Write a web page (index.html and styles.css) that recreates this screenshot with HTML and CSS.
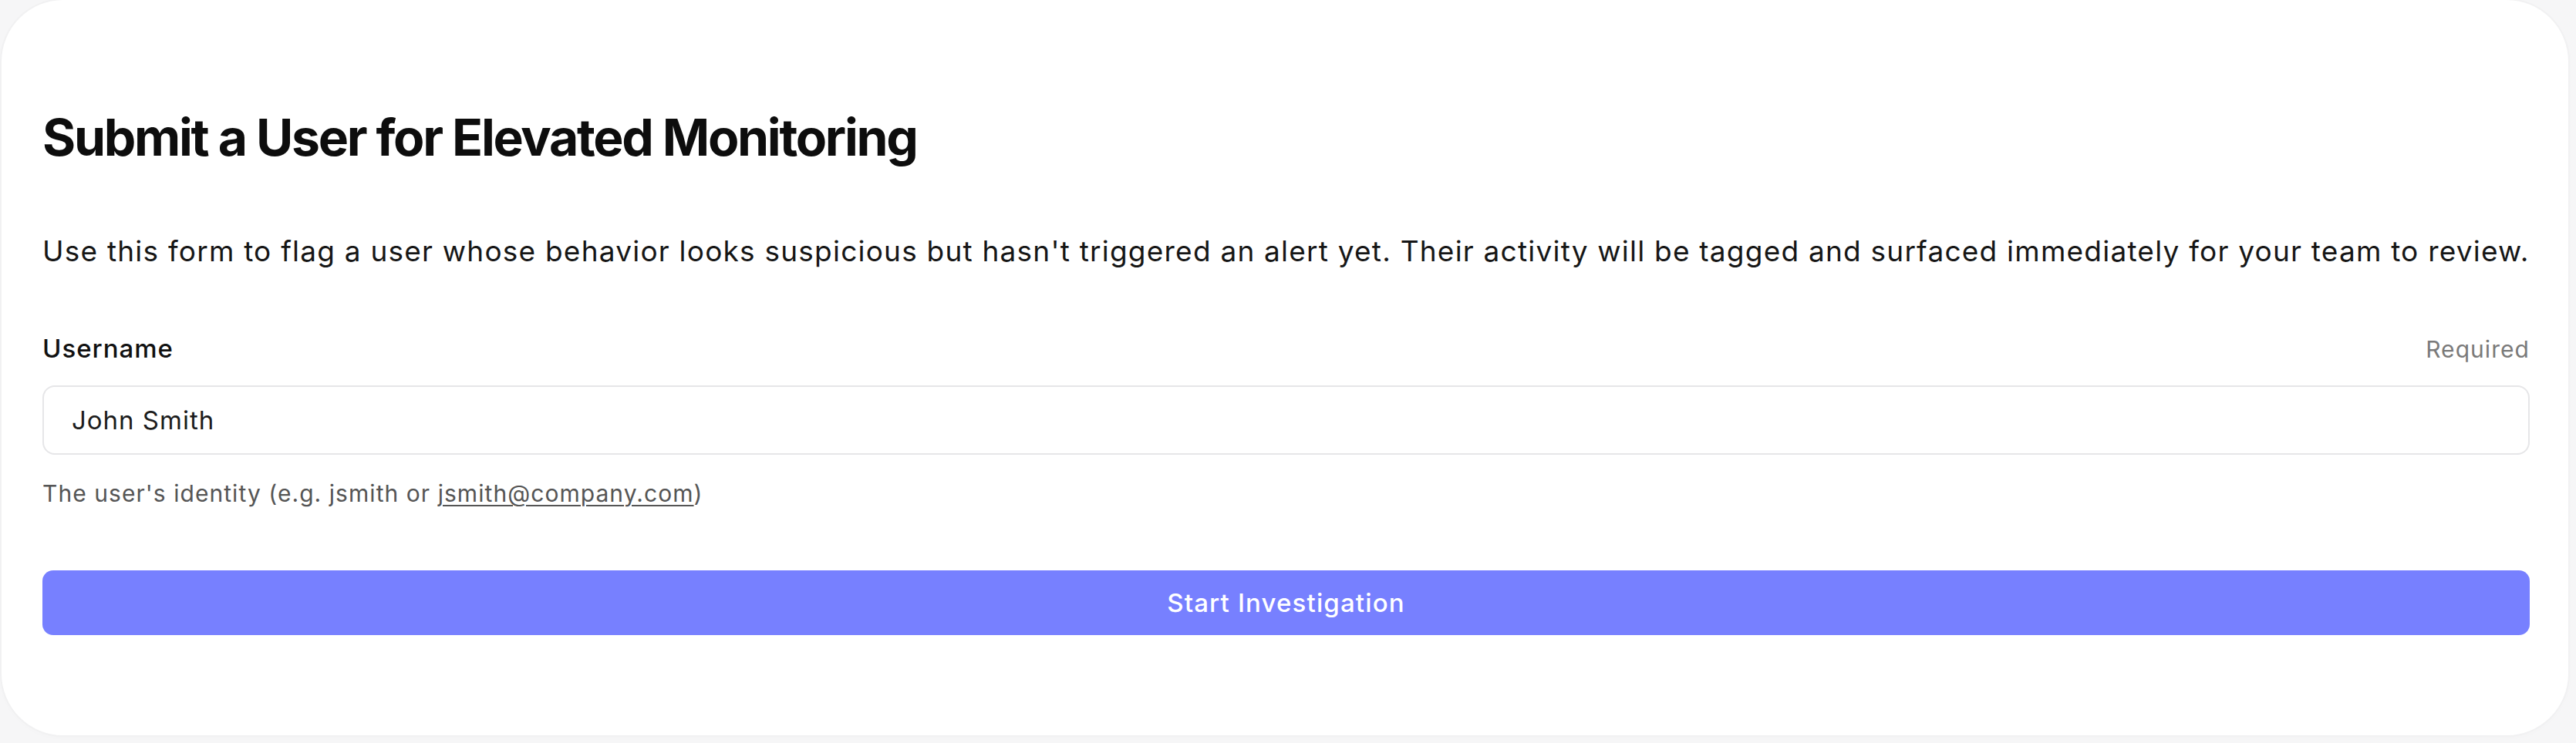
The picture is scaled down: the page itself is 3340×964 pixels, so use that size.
FILE: index.html
```html
<!DOCTYPE html>
<html lang="en">
<head>
<meta charset="utf-8">
<title>Submit a User for Elevated Monitoring</title>
<link rel="stylesheet" href="styles.css">
</head>
<body>
<div class="page">
  <main class="card">
    <h1 class="title">Submit a User for Elevated Monitoring</h1>
    <p class="intro">Use this form to flag a user whose behavior looks suspicious but hasn't triggered an alert yet. Their activity will be tagged and surfaced immediately for your team to review.</p>
    <form class="form">
      <div class="field">
        <div class="field-head">
          <label class="label" for="username">Username</label>
          <span class="required">Required</span>
        </div>
        <input class="input" id="username" type="text" value="John Smith">
        <p class="help">The user's identity (e.g. jsmith or <a class="help-link" href="#">jsmith@company.com</a>)</p>
      </div>
      <button class="submit" type="button">Start Investigation</button>
    </form>
  </main>
</div>
</body>
</html>
```

FILE: styles.css
```css
* { box-sizing: border-box; }

html, body {
  margin: 0;
  padding: 0;
  background: #f6f6f7;
  font-family: Inter, "Noto Sans", "Liberation Sans", sans-serif;
  color: #111;
}

.page {
  padding: 0 10px 10px 2px;
  width: 3340px;
  height: 964px;
}

.card {
  background: #ffffff;
  border-radius: 80px;
  box-shadow: 0 0 0 2px #f1f1f2, 0 2px 8px rgba(0, 0, 0, 0.02);
  height: 954px;
  padding: 138px 50px 0 53px;
  display: flex;
  flex-direction: column;
}

.title {
  margin: 0;
  font-size: 66px;
  line-height: 80px;
  font-weight: 700;
  letter-spacing: -0.035em;
  color: #0d0d0d;
}

.intro {
  margin: 81px 0 0;
  font-size: 37px;
  line-height: 54px;
  font-weight: 400;
  letter-spacing: 0.033em;
  color: #161616;
}

.form {
  margin-top: 79px;
  display: flex;
  flex-direction: column;
}

.field {
  display: flex;
  flex-direction: column;
}

.field-head {
  display: flex;
  justify-content: space-between;
  align-items: baseline;
  height: 40px;
}

.label {
  font-size: 33px;
  line-height: 40px;
  font-weight: 500;
  letter-spacing: 0.03em;
  color: #111;
}

.required {
  font-size: 30px;
  line-height: 40px;
  letter-spacing: 0.035em;
  color: #7a7a7a;
}

.input {
  margin-top: 28px;
  height: 90px;
  width: 100%;
  border: 2px solid #e6e6e8;
  border-radius: 16px;
  padding: 0 36px;
  font-family: inherit;
  font-size: 33px;
  letter-spacing: 0.03em;
  color: #1c1c1c;
  background: #fff;
  outline: none;
}

.help {
  margin: 30px 0 0;
  font-size: 30px;
  line-height: 40px;
  letter-spacing: 0.035em;
  color: #555;
}

.help-link {
  color: #555;
  text-decoration: underline;
  text-underline-offset: 4px;
  text-decoration-thickness: 2px;
}

.submit {
  margin-top: 80px;
  height: 84px;
  width: 100%;
  border: none;
  border-radius: 14px;
  background: #7780ff;
  color: #fff;
  font-family: inherit;
  font-size: 33px;
  font-weight: 500;
  letter-spacing: 0.035em;
  cursor: pointer;
}
```
